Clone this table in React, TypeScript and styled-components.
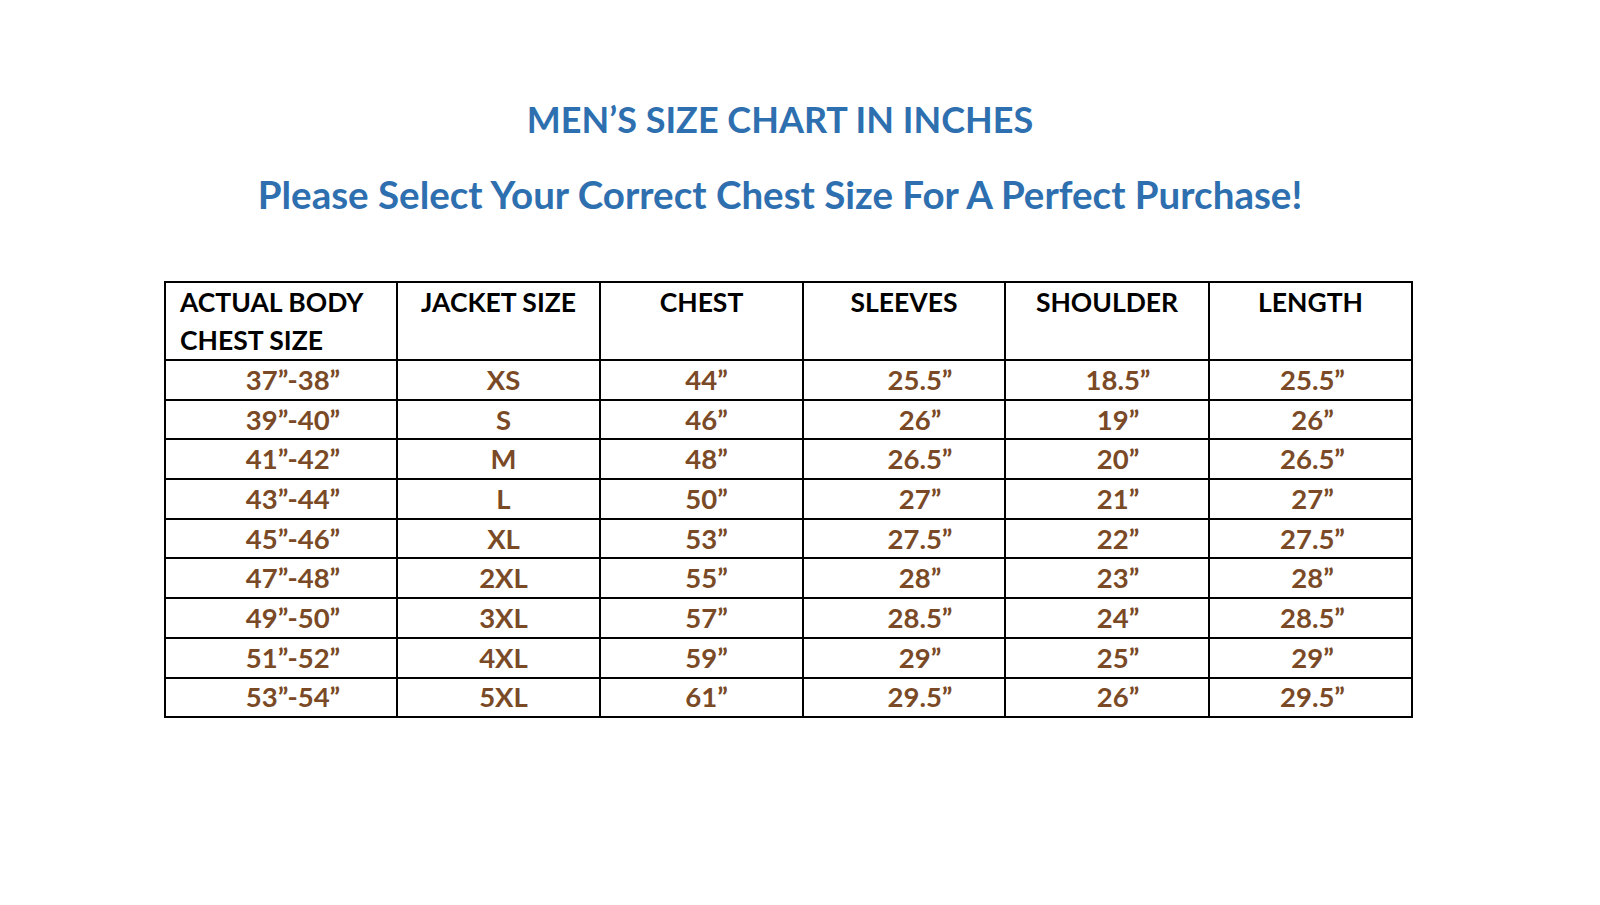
import styled, { createGlobalStyle } from 'styled-components';

const GlobalStyle = createGlobalStyle`
  html, body {
    margin: 0;
    padding: 0;
    background: #ffffff;
  }
  body {
    font-family: Lato, 'Liberation Sans', sans-serif;
  }
`;

type Row = [string, string, string, string, string, string];

const headers = ['JACKET SIZE', 'CHEST', 'SLEEVES', 'SHOULDER', 'LENGTH'];

const rows: Row[] = [
  ['37”-38”', 'XS', '44”', '25.5”', '18.5”', '25.5”'],
  ['39”-40”', 'S', '46”', '26”', '19”', '26”'],
  ['41”-42”', 'M', '48”', '26.5”', '20”', '26.5”'],
  ['43”-44”', 'L', '50”', '27”', '21”', '27”'],
  ['45”-46”', 'XL', '53”', '27.5”', '22”', '27.5”'],
  ['47”-48”', '2XL', '55”', '28”', '23”', '28”'],
  ['49”-50”', '3XL', '57”', '28.5”', '24”', '28.5”'],
  ['51”-52”', '4XL', '59”', '29”', '25”', '29”'],
  ['53”-54”', '5XL', '61”', '29.5”', '26”', '29.5”'],
];

// the source sheet has each value column nudged a bit right of centre
const nudges = [24, 10, 10, 32, 22, 4];
const widths = [232, 203, 203, 202, 204, 203];

export default function App() {
  return (
    <>
      <GlobalStyle />
      <Page>
        <Sheet>
          <Title>MEN’S SIZE CHART IN INCHES</Title>
          <Subtitle>Please Select Your Correct Chest Size For A Perfect Purchase!</Subtitle>
          <Chart>
            <colgroup>
              {widths.map((w, i) => (
                <col key={i} style={{ width: w }} />
              ))}
            </colgroup>
            <thead>
              <HeadRow>
                <HeadCell $align="left">
                  ACTUAL BODY
                  <br />
                  CHEST SIZE
                </HeadCell>
                {headers.map((h) => (
                  <HeadCell key={h} $align="center">
                    {h}
                  </HeadCell>
                ))}
              </HeadRow>
            </thead>
            <tbody>
              {rows.map((r) => (
                <DataRow key={r[0]}>
                  {r.map((v, i) => (
                    <DataCell key={i} $nudge={nudges[i]}>
                      {v}
                    </DataCell>
                  ))}
                </DataRow>
              ))}
            </tbody>
          </Chart>
        </Sheet>
      </Page>
    </>
  );
}

const Page = styled.main`
  width: 1600px;
  height: 905px;
  background: #ffffff;
  overflow: hidden;
`;

const Sheet = styled.section`
  display: flex;
  flex-direction: column;
  width: 1247px;
  margin-left: 164px;
  padding-top: 95px;
`;

const Title = styled.h1`
  margin: 0;
  padding-right: 15px;
  text-align: center;
  font-family: Lato, 'Liberation Sans', sans-serif;
  font-weight: 700;
  font-size: 36px;
  line-height: 48px;
  color: #2e6fb0;
`;

const Subtitle = styled.h2`
  margin: 27px 0 0;
  padding-right: 15px;
  text-align: center;
  font-family: Lato, 'Liberation Sans', sans-serif;
  font-weight: 700;
  font-size: 38.5px;
  line-height: 48px;
  color: #2e6fb0;
`;

const Chart = styled.table`
  margin-top: 63px;
  width: 1247px;
  table-layout: fixed;
  border-collapse: collapse;
  border: 2px solid #000000;
`;

const HeadRow = styled.tr`
  height: 77px;
`;

const HeadCell = styled.th<{ $align: 'left' | 'center' }>`
  border: 2px solid #000000;
  padding: 0 0 0 ${(p) => (p.$align === 'left' ? '14px' : '0')};
  vertical-align: top;
  text-align: ${(p) => p.$align};
  font-family: Lato, 'Liberation Sans', sans-serif;
  font-weight: 700;
  font-size: 26.5px;
  line-height: 38px;
  color: #000000;
`;

const DataRow = styled.tr`
  height: 39.7px;
`;

const DataCell = styled.td<{ $nudge: number }>`
  border: 2px solid #000000;
  padding: 0 0 0 ${(p) => p.$nudge}px;
  vertical-align: middle;
  text-align: center;
  font-family: Lato, 'Liberation Sans', sans-serif;
  font-weight: 700;
  font-size: 27.5px;
  line-height: 30px;
  color: #7a4a26;
`;
